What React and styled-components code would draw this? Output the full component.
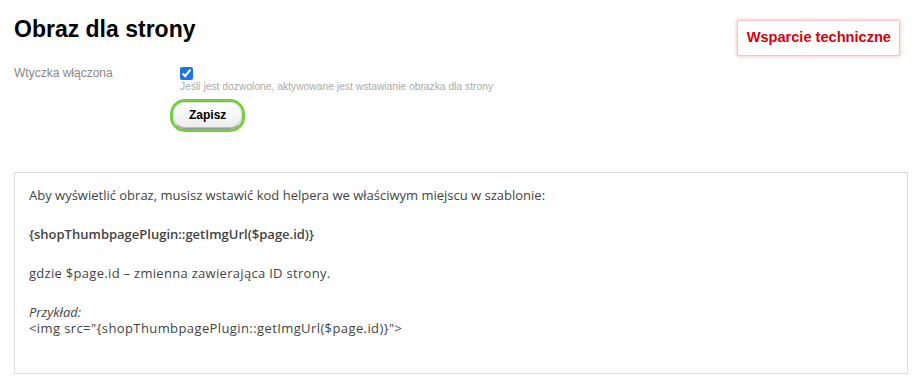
import React from 'react';
import styled, { createGlobalStyle } from 'styled-components';

const GlobalStyle = createGlobalStyle`
  html, body {
    margin: 0;
    padding: 0;
    background: #fff;
  }
  body {
    font-family: "Liberation Sans", Arial, sans-serif;
  }
`;

const Page = styled.div`
  padding: 0 12px 0 14px;
`;

const Header = styled.div`
  display: flex;
  justify-content: space-between;
  align-items: flex-start;
  padding-top: 15px;
`;

const Title = styled.h1`
  margin: 0;
  font-size: 23px;
  line-height: 28px;
  font-weight: bold;
  color: #000;
`;

const SupportLink = styled.a`
  display: block;
  margin: 5px 8px 0 0;
  padding: 8px 8px 9px 9px;
  font-size: 14.6px;
  line-height: 17px;
  font-weight: bold;
  color: #d6000d;
  text-decoration: none;
  background: #fff;
  border: 1px solid #f3c4c7;
  box-shadow: 0 0 4px rgba(220, 40, 50, 0.35);
`;

const Form = styled.div`
  display: grid;
  grid-template-columns: 166px 1fr;
  margin-top: 9px;
`;

const Label = styled.div`
  font-size: 12px;
  color: #888;
  padding-top: 1px;
`;

const Field = styled.div`
  display: flex;
  flex-direction: column;
  align-items: flex-start;
`;

const Checkbox = styled.input`
  margin: 2px 0 0 0;
  width: 13px;
  height: 13px;
  accent-color: #1a73e8;
`;

const Hint = styled.div`
  font-size: 10.3px;
  color: #aaa;
  margin-top: 1px;
`;

const SaveWrap = styled.div`
  margin: 7px 0 0 -10px;
  border: 3px solid #74cc3f;
  border-radius: 15px;
  padding: 0;
`;

const SaveButton = styled.button`
  display: block;
  font-family: "Liberation Sans", Arial, sans-serif;
  font-size: 12px;
  font-weight: bold;
  color: #000;
  padding: 5px 15px 6px;
  border: 1px solid #ddd;
  border-bottom-color: #999;
  border-radius: 12px;
  background: linear-gradient(#fff, #ececec);
  box-shadow: inset 0 -1px 0 #bbb;
  cursor: pointer;
`;

const InfoBox = styled.div`
  margin-top: 40px;
  width: 894px;
  box-sizing: border-box;
  border: 1px solid #ddd;
  padding: 14px 14px 37px;
  font-family: "Open Sans", "Noto Sans", sans-serif;
  font-size: 13px;
  color: #444;
  line-height: 16px;
`;

const Para = styled.p`
  margin: 0 0 23px;
  font-weight: ${p => (p.bold ? 600 : 'normal')};
  letter-spacing: ${p => (p.wide ? '0.3px' : 'normal')};
  &:last-child {
    margin-bottom: 0;
  }
`;

const Example = styled.div`
  font-style: italic;
  line-height: 16px;
`;

const CodeLine = styled.div`
  letter-spacing: 0.4px;
  line-height: 16px;
`;

export default function App() {
  return (
    <Page>
      <GlobalStyle />
      <Header>
        <Title>Obraz dla strony</Title>
        <SupportLink href="#">Wsparcie techniczne</SupportLink>
      </Header>
      <Form>
        <Label>Wtyczka włączona</Label>
        <Field>
          <Checkbox type="checkbox" defaultChecked />
          <Hint>Jeśli jest dozwolone, aktywowane jest wstawianie obrazka dla strony</Hint>
          <SaveWrap>
            <SaveButton>Zapisz</SaveButton>
          </SaveWrap>
        </Field>
      </Form>
      <InfoBox>
        <Para>Aby wyświetlić obraz, musisz wstawić kod helpera we właściwym miejscu w szablonie:</Para>
        <Para bold>{'{shopThumbpagePlugin::getImgUrl($page.id)}'}</Para>
        <Para wide>gdzie $page.id – zmienna zawierająca ID strony.</Para>
        <Para>
          <Example>Przykład:</Example>
          <CodeLine>{'<img src="{shopThumbpagePlugin::getImgUrl($page.id)}">'}</CodeLine>
        </Para>
      </InfoBox>
    </Page>
  );
}
